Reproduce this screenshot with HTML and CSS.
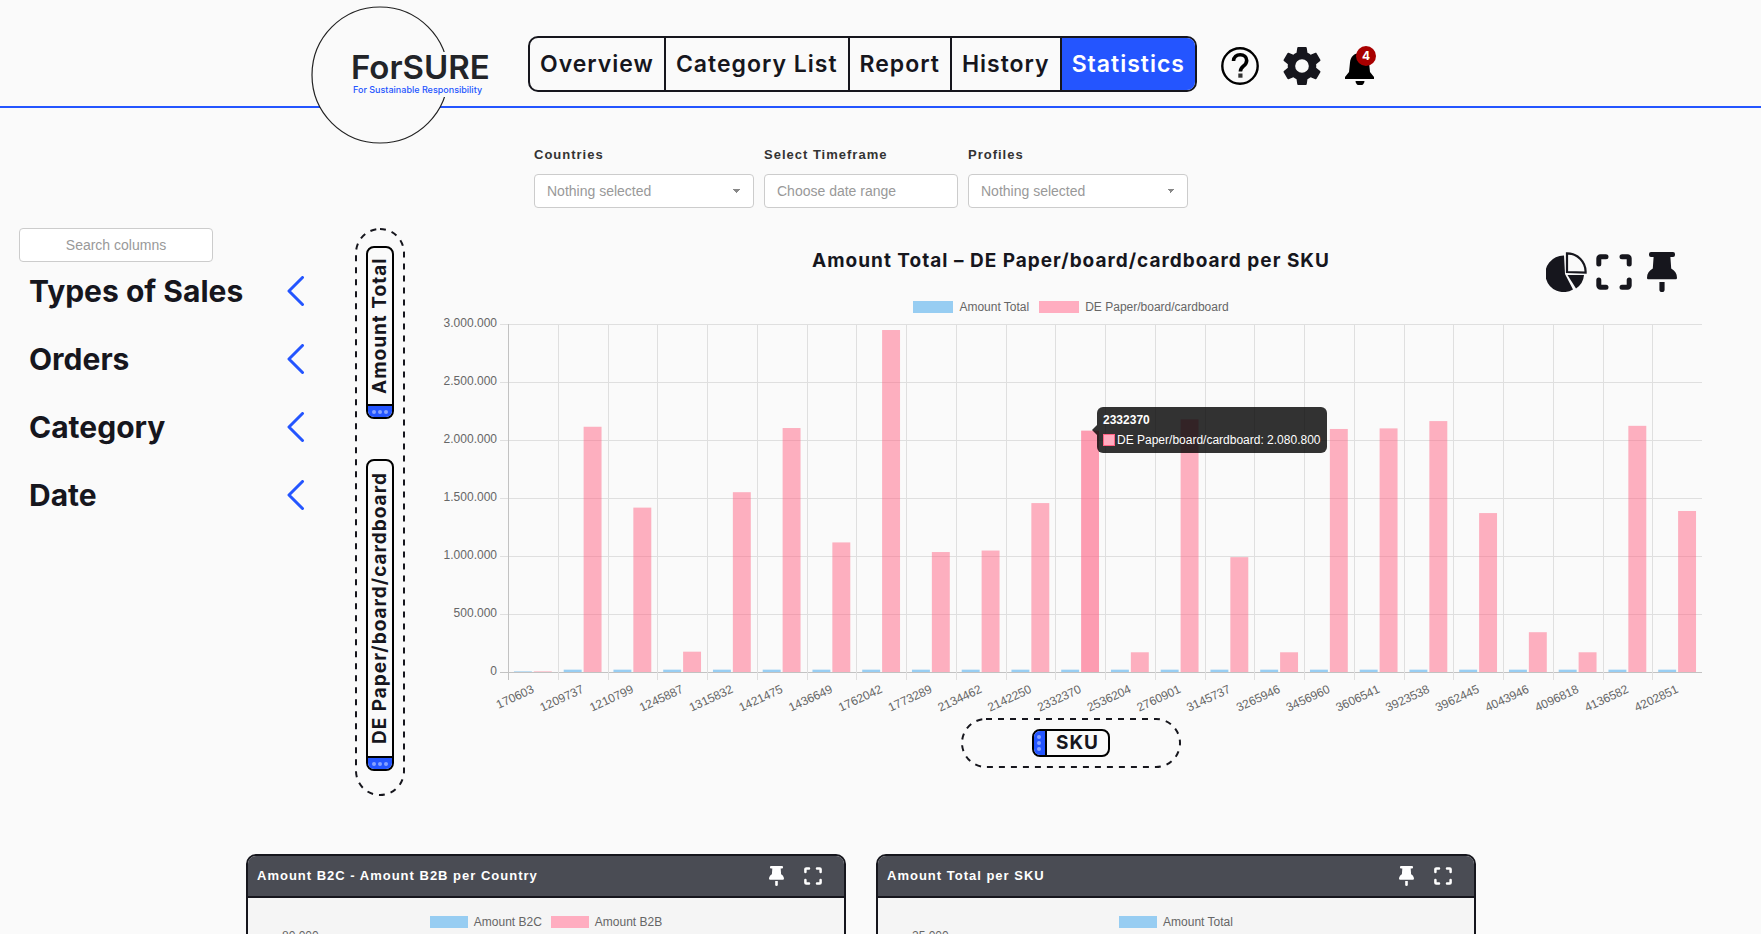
FILE: index.html
```html
<!DOCTYPE html>
<html lang="en">
<head>
	<meta charset="UTF-8" />
	<meta name="viewport" content="width=device-width, initial-scale=1.0" />
	<link rel="stylesheet" href="styles.css">
	<title>ForSURE - Statistics</title>
</head>
<body>
	<!-- shared icons -->
	<svg class="sprite" aria-hidden="true">
		<symbol id="icon-pin" viewBox="0 0 30 40">
			<path d="M4 0h22a2 2 0 0 1 2 2v1a2 2 0 0 1-2 2h-2.600l.8 11.500c3.500 2 5.800 5 5.800 9.200 0 1-.6 1.600-1.600 1.600H1.600C.6 27.300 0 26.700 0 25.700c0-4.200 2.300-7.200 5.800-9.200L6.600 5H4a2 2 0 0 1-2-2V2a2 2 0 0 1 2-2z"/>
			<path d="M12.400 30h5.200v7.400a2.600 2.600 0 0 1-5.200 0z"/>
		</symbol>
		<symbol id="icon-expand" viewBox="0 0 36 36">
			<path d="M2.800 10V4.500a1.700 1.700 0 0 1 1.700-1.700H10M26 2.800h5.500a1.700 1.700 0 0 1 1.700 1.700V10M33.200 26v5.500a1.700 1.700 0 0 1-1.700 1.700H26M10 33.200H4.500a1.700 1.700 0 0 1-1.700-1.700V26" fill="none" stroke="currentColor" stroke-width="5" stroke-linecap="round"/>
		</symbol>
		<symbol id="icon-chevron" viewBox="0 0 18 30">
			<path d="M15.500 1.500L2 15l13.500 13.500" fill="none" stroke="currentColor" stroke-width="3" stroke-linecap="round" stroke-linejoin="round"/>
		</symbol>
	</svg>

	<header class="header">
		<a class="logo" href="#" aria-label="ForSURE">
			<svg width="180" height="138" viewBox="0 0 180 138">
				<circle class="logo-ring" cx="69" cy="69" r="68"/>
				<rect class="logo-gap" x="118" y="46" width="30" height="45"/>
				<text class="logo-name" x="40" y="73">ForSURE</text>
				<text class="logo-claim" x="42" y="87">For Sustainable Responsibility</text>
			</svg>
		</a>
		<nav class="nav">
			<a class="nav-link" href="#">Overview</a>
			<a class="nav-link" href="#">Category List</a>
			<a class="nav-link" href="#">Report</a>
			<a class="nav-link" href="#">History</a>
			<a class="nav-link active" href="#">Statistics</a>
		</nav>
		<div class="header-icons">
			<button class="icon-btn" aria-label="Help">
				<svg width="38" height="38" viewBox="0 0 38 38">
					<circle cx="19" cy="19" r="17.700" fill="none" stroke="#000" stroke-width="2.400"/>
					<path d="M12.500 14c.2-4 3-6.300 6.700-6.300 3.800 0 6.500 2.300 6.500 5.700 0 2.700-1.500 4.200-3.300 5.700-2 1.700-3 2.700-3 5.300" fill="none" stroke="#000" stroke-width="3.600"/>
					<rect x="17.300" y="26.500" width="4.200" height="4.200"/>
				</svg>
			</button>
			<button class="icon-btn" aria-label="Settings">
				<svg width="38" height="38" viewBox="2 2 20 20">
					<path fill="#16161d" d="M19.430 12.980c.04-.32.07-.64.07-.98s-.03-.66-.07-.98l2.110-1.650c.19-.15.240-.42.120-.64l-2-3.460c-.12-.22-.39-.3-.61-.22l-2.490 1c-.52-.4-1.080-.73-1.690-.98l-.38-2.650C14.460 2.180 14.250 2 14 2h-4c-.25 0-.46.180-.49.420l-.38 2.650c-.61.250-1.170.590-1.690.980l-2.490-1c-.23-.09-.49 0-.61.220l-2 3.460c-.13.220-.07.490.120.640l2.110 1.650c-.04.320-.07.650-.07.980s.03.660.070.980l-2.110 1.650c-.19.150-.24.420-.12.640l2 3.460c.12.220.390.300.610.220l2.490-1c.52.400 1.080.730 1.690.980l.38 2.650c.03.240.240.420.490.420h4c.25 0 .46-.18.490-.42l.38-2.650c.61-.25 1.170-.59 1.690-.98l2.490 1c.23.090.490 0 .61-.22l2-3.460c.12-.22.070-.49-.12-.64l-2.110-1.650zM12 15.600a3.600 3.600 0 1 1 0-7.200 3.600 3.600 0 0 1 0 7.200z"/>
				</svg>
			</button>
			<button class="icon-btn bell" aria-label="Notifications">
				<svg width="30" height="38" viewBox="0 0 30 38">
					<path d="M15 6C9 6 5.500 10 5 15.500L4 25l-4 5v2h29v-2l-4-5-1-9.500C23.500 10 21 6 15 6z"/>
					<path d="M10.500 34h9a4.500 4.500 0 0 1-9 0z"/>
				</svg>
				<span class="badge">4</span>
			</button>
		</div>
	</header>

	<form class="filters">
		<div class="field">
			<label for="countries">Countries</label>
			<select class="control" id="countries"><option>Nothing selected</option></select>
		</div>
		<div class="field field-date">
			<label for="timeframe">Select Timeframe</label>
			<input class="control" id="timeframe" type="text" placeholder="Choose date range">
		</div>
		<div class="field">
			<label for="profiles">Profiles</label>
			<select class="control" id="profiles"><option>Nothing selected</option></select>
		</div>
	</form>

	<main class="workspace">
		<aside class="sidebar">
			<input class="control search" type="text" placeholder="Search columns" aria-label="Search columns">
			<button class="group">Types of Sales<svg class="chevron"><use href="#icon-chevron"/></svg></button>
			<button class="group">Orders<svg class="chevron"><use href="#icon-chevron"/></svg></button>
			<button class="group">Category<svg class="chevron"><use href="#icon-chevron"/></svg></button>
			<button class="group">Date<svg class="chevron"><use href="#icon-chevron"/></svg></button>
		</aside>

		<div class="dropzone dropzone-y">
			<svg class="outline" aria-hidden="true"><rect class="dashes" x="1" y="1" rx="24"/></svg>
			<div class="chip chip-y chip-short"><span class="chip-text">Amount Total</span><span class="handle"><i></i><i></i><i></i></span></div>
			<div class="chip chip-y"><span class="chip-text">DE Paper/board/cardboard</span><span class="handle"><i></i><i></i><i></i></span></div>
		</div>

		<section class="chart-area">
			<div class="chart-head">
				<h1 class="chart-title">Amount Total – DE Paper/board/cardboard per SKU</h1>
				<div class="chart-tools">
					<button class="icon-btn" aria-label="Chart type">
						<svg width="41" height="40" viewBox="0 0 41 40">
							<path d="M18 3.500A18.300 18.300 0 1 0 27 37.500L19 22z"/>
							<path d="M21.500 23H38a18 18 0 0 1-8 13.500z"/>
							<path d="M21 1.300A18.500 18.500 0 0 1 39.600 20.500L21 20z" fill="none" stroke="#16161d" stroke-width="2.200"/>
						</svg>
					</button>
					<button class="icon-btn" aria-label="Fullscreen"><svg width="36" height="36"><use href="#icon-expand"/></svg></button>
					<button class="icon-btn pin" aria-label="Pin"><svg width="30" height="40"><use href="#icon-pin"/></svg></button>
				</div>
			</div>
			<div class="legend">
				<span class="legend-item"><i class="swatch blue"></i>Amount Total</span>
				<span class="legend-item"><i class="swatch pink"></i>DE Paper/board/cardboard</span>
			</div>
			<div class="plot">
				<svg id="chart" class="chart" role="img" aria-label="Amount Total and DE Paper/board/cardboard per SKU"></svg>
				<div id="tooltip" class="tooltip">
					<strong>2332370</strong>
					<span><i class="tip-swatch"></i>DE Paper/board/cardboard: 2.080.800</span>
				</div>
			</div>
			<div class="dropzone dropzone-x">
				<svg class="outline" aria-hidden="true"><rect class="dashes" x="1" y="1" rx="24"/></svg>
				<div class="chip chip-x"><span class="handle"><i></i><i></i><i></i></span><span class="chip-text">SKU</span></div>
			</div>
		</section>
	</main>

	<section class="cards">
		<article class="card">
			<div class="card-head">
				<h2 class="card-title">Amount B2C - Amount B2B per Country</h2>
				<button class="icon-btn" aria-label="Pin"><svg width="15" height="20"><use href="#icon-pin"/></svg></button>
				<button class="icon-btn" aria-label="Fullscreen"><svg width="18" height="18"><use href="#icon-expand"/></svg></button>
			</div>
			<div class="card-body">
				<div class="legend">
					<span class="legend-item"><i class="swatch blue"></i>Amount B2C</span>
					<span class="legend-item"><i class="swatch pink"></i>Amount B2B</span>
				</div>
				<span class="card-tick">80.000</span>
			</div>
		</article>
		<article class="card">
			<div class="card-head">
				<h2 class="card-title">Amount Total per SKU</h2>
				<button class="icon-btn" aria-label="Pin"><svg width="15" height="20"><use href="#icon-pin"/></svg></button>
				<button class="icon-btn" aria-label="Fullscreen"><svg width="18" height="18"><use href="#icon-expand"/></svg></button>
			</div>
			<div class="card-body">
				<div class="legend">
					<span class="legend-item"><i class="swatch blue"></i>Amount Total</span>
				</div>
				<span class="card-tick">25.000</span>
			</div>
		</article>
	</section>

	<script src="chart.js"></script>
</body>
</html>
```
FILE: styles.css
```css
* {
	box-sizing: border-box;
}
body {
	margin: 0;
	height: 100vh;
	overflow: hidden;
	background-color: #fafafa;
	color: #333;
	font-family: "Liberation Sans", Arial, sans-serif;
	font-size: 14px;
	line-height: 20px;
}
button {
	margin: 0;
	padding: 0;
	border: 0;
	background: none;
	color: inherit;
	font: inherit;
	cursor: pointer;
}
svg {
	display: block;
}
.sprite {
	display: none;
}
.icon-btn {
	position: relative;
	fill: currentColor;
}

/* header */
.header {
	display: flex;
	height: 108px;
	padding-left: 311px;
	border-bottom: 2px solid #2455ff;
}
.logo {
	width: 217px;
	height: 138px;
	padding-top: 6px;
}
.logo-ring {
	fill: #fafafa;
	stroke: #222;
	stroke-width: 1.2;
}
.logo-gap {
	fill: #fafafa;
}
.logo-name {
	font: 600 33px Inter, sans-serif;
	fill: #222428;
}
.logo-claim {
	font: 500 9px Inter, sans-serif;
	fill: #2455ff;
}
.nav {
	display: flex;
	height: 56px;
	margin-top: 36px;
	border: 2px solid #16161d;
	border-radius: 10px;
	overflow: hidden;
}
.nav-link {
	padding: 0 10px;
	color: #16161d;
	font: 600 23px/52px Inter, sans-serif;
	letter-spacing: 1px;
	text-decoration: none;
}
.nav-link + .nav-link {
	border-left: 2px solid #16161d;
}
.nav-link.active {
	background-color: #2455ff;
	color: #fff;
}
.header-icons {
	display: flex;
	align-items: flex-start;
	gap: 24px;
	margin: 47px 0 0 24px;
}
.bell {
	color: #000;
}
.badge {
	position: absolute;
	top: -1px;
	right: -1px;
	width: 20px;
	height: 20px;
	border-radius: 50%;
	background-color: #a80000;
	color: #fff;
	font: 700 12px/20px Inter, sans-serif;
}

/* filters */
.filters {
	display: flex;
	gap: 10px;
	margin: 36px 0 0 534px;
}
.field {
	width: 220px;
}
.field-date {
	width: 194px;
}
.field label {
	display: block;
	margin-bottom: 8px;
	font-size: 13px;
	font-weight: 700;
	line-height: 22px;
	letter-spacing: 1px;
}
.control {
	display: block;
	width: 100%;
	height: 34px;
	padding: 0 12px;
	border: 1px solid #ccc;
	border-radius: 4px;
	background-color: #fff;
	color: #999;
	font: 14px/20px "Liberation Sans", Arial, sans-serif;
}
.control::placeholder {
	color: #999;
}
select.control {
	appearance: none;
	background-image: linear-gradient(to bottom right, #888 50%, transparent 50%), linear-gradient(to bottom left, #888 50%, transparent 50%);
	background-position: right 12px center, right 16px center;
	background-size: 4px 4px;
	background-repeat: no-repeat;
}

/* workspace */
.workspace {
	display: flex;
	margin-top: 20px;
	padding: 0 59px 0 19px;
}
.sidebar {
	flex: 0 0 286px;
}
.search {
	width: 194px;
	text-align: center;
}
.group {
	display: flex;
	align-items: center;
	justify-content: space-between;
	width: 100%;
	height: 38px;
	margin: 10px 0 30px;
	padding-left: 10px;
	color: #16161d;
	font: 700 30px/38px Inter, sans-serif;
}
.chevron {
	width: 18px;
	height: 30px;
	color: #2455ff;
}
.dropzone {
	position: relative;
	display: flex;
}
.outline {
	position: absolute;
	inset: 0;
	width: 100%;
	height: 100%;
}
.dashes {
	width: calc(100% - 2px);
	height: calc(100% - 2px);
	fill: none;
	stroke: #16161d;
	stroke-width: 2;
	stroke-dasharray: 6 6;
}
.dropzone-y {
	flex: 0 0 50px;
	flex-direction: column;
	align-items: center;
	gap: 40px;
	height: 568px;
	margin-left: 50px;
	padding-top: 18px;
}
.dropzone-x {
	align-items: center;
	justify-content: center;
	width: 220px;
	height: 50px;
	margin: 0 auto;
}
.chip {
	display: flex;
	border: 2px solid #000;
	border-radius: 8px;
	overflow: hidden;
	color: #16161d;
	font: 700 19px/24px Inter, sans-serif;
	letter-spacing: 1px;
}
.chip-y {
	flex-direction: column;
	width: 28px;
	height: 312px;
}
.chip-short {
	height: 173px;
}
.chip-y .chip-text {
	flex: 1;
	writing-mode: vertical-rl;
	transform: rotate(180deg);
	text-align: center;
	white-space: nowrap;
}
.chip-x .chip-text {
	padding: 0 9px;
}
.handle {
	display: flex;
	align-items: center;
	justify-content: center;
	gap: 2px;
	background-color: #2455ff;
}
.handle i {
	width: 4px;
	height: 4px;
	border-radius: 50%;
	background-color: #87a2ff;
}
.chip-y .handle {
	height: 13px;
	border-top: 2px solid #000;
}
.chip-x .handle {
	flex-direction: column;
	width: 13px;
	border-right: 2px solid #000;
}

/* main chart */
.chart-area {
	flex: 1;
	min-width: 0;
	margin-left: 35px;
}
.chart-head {
	display: grid;
	grid-template-columns: 1fr auto 1fr;
	height: 72px;
	padding-top: 20px;
}
.chart-title {
	grid-column: 2;
	margin: 0;
	color: #16161d;
	font: 700 19px/26px Inter, sans-serif;
	letter-spacing: 1px;
	white-space: nowrap;
}
.chart-tools {
	display: flex;
	align-items: center;
	justify-content: flex-end;
	gap: 9px;
	height: 40px;
	margin: 4px 25px 0 0;
	color: #16161d;
}
.pin {
	margin-left: 6px;
}
.legend {
	display: flex;
	justify-content: center;
	gap: 10px;
	color: #666;
	font-size: 12px;
	line-height: 14px;
}
.legend-item {
	display: flex;
	align-items: center;
	gap: 6px;
}
.swatch {
	width: 40px;
	height: 12px;
}
.blue {
	background-color: #97cdf2;
}
.pink {
	background-color: #ffadc0;
}
.plot {
	position: relative;
}
.chart {
	width: 100%;
	height: 404px;
	font-size: 12px;
}
.chart text {
	fill: #666;
}
.tooltip {
	display: flex;
	position: absolute;
	flex-direction: column;
	gap: 6px;
	padding: 6px;
	border-radius: 6px;
	background-color: rgba(0, 0, 0, 0.8);
	color: #fff;
	font-size: 12px;
	line-height: 14px;
	white-space: nowrap;
}
.tooltip::before {
	content: "";
	position: absolute;
	top: 18px;
	left: -5px;
	border: 5px solid transparent;
	border-left: 0;
	border-right-color: rgba(0, 0, 0, 0.8);
}
.tooltip span {
	display: flex;
	align-items: center;
	gap: 2px;
}
.tip-swatch {
	width: 12px;
	height: 12px;
	border: 1px solid #ff6384;
	background-color: #ffadc0;
}

/* cards */
.cards {
	display: flex;
	gap: 30px;
	margin: 58px 285px 0 246px;
}
.card {
	flex: 1;
	height: 400px;
	border: 2px solid #16161d;
	border-radius: 10px;
	overflow: hidden;
	background-color: #f5f5f5;
}
.card-head {
	display: flex;
	align-items: center;
	gap: 20px;
	height: 42px;
	padding: 0 22px 0 9px;
	border-bottom: 2px solid #16161d;
	background-color: #4a4c54;
	color: #fff;
}
.card-title {
	flex: 1;
	margin: 0;
	font-size: 13px;
	letter-spacing: 1px;
}
.card-body {
	padding: 17px 34px 0;
}
.card-body .legend {
	gap: 9px;
}
.card-body .swatch {
	width: 38px;
}
.card-tick {
	display: block;
	color: #666;
	font-size: 12px;
	line-height: 14px;
}
```
FILE: chart.js
```js
const rows = [
	["170603", 500, 2000],
	["1209737", 20000, 2114000],
	["1210799", 20000, 1417000],
	["1245887", 20000, 175000],
	["1315832", 20000, 1550000],
	["1421475", 20000, 2103000],
	["1436649", 20000, 1117000],
	["1762042", 20000, 2948000],
	["1773289", 20000, 1034000],
	["2134462", 20000, 1047000],
	["2142250", 20000, 1456000],
	["2332370", 20000, 2080800],
	["2536204", 20000, 170000],
	["2760901", 20000, 2178000],
	["3145737", 20000, 990000],
	["3265946", 20000, 170000],
	["3456960", 20000, 2095000],
	["3606541", 20000, 2100000],
	["3923538", 20000, 2163000],
	["3962445", 20000, 1370000],
	["4043946", 20000, 343000],
	["4096818", 20000, 170000],
	["4136582", 20000, 2122000],
	["4202851", 20000, 1388000],
];
const hovered = 11;
const max = 3000000;
const left = 68;
const top_ = 10;
const plotHeight = 348;

const chart = document.querySelector("#chart");
const tooltip = document.querySelector("#tooltip");

const format = (n) => String(n).replace(/\B(?=(\d{3})+$)/g, ".");
const line = (x1, y1, x2, y2, color) =>
	`<path d="M${x1} ${y1}L${x2} ${y2}" stroke="${color}"/>`;

const draw = () => {
	const width = chart.clientWidth;
	const step = (width - left) / rows.length;
	const bottom = top_ + plotHeight;
	let out = "";

	for (let v = 0; v <= max; v += 500000) {
		const y = Math.round(bottom - (v / max) * plotHeight) + 0.5;
		out += line(left - 8, y, width, y, v ? "#dfdfdf" : "#c2c2c2");
		out += `<text x="${left - 11}" y="${y + 2}" text-anchor="end">${format(v)}</text>`;
	}

	rows.forEach(([sku, total, paper], i) => {
		const x = left + i * step;
		const gx = Math.round(x) + 0.5;
		const bar = step * 0.36;
		const h1 = Math.max((total / max) * plotHeight, 0.6);
		const h2 = Math.max((paper / max) * plotHeight, 0.6);
		out += line(gx, top_, gx, bottom + 8, i ? "#dfdfdf" : "#c2c2c2");
		out += `<rect x="${x + step * 0.12}" y="${bottom - h1}" width="${bar}" height="${h1}" fill="#36a2eb" fill-opacity="0.5"/>`;
		out += `<rect x="${x + step * 0.52}" y="${bottom - h2}" width="${bar}" height="${h2}" fill="#ff6384" fill-opacity="${i === hovered ? 0.62 : 0.5}"/>`;
		out += `<text text-anchor="end" transform="translate(${x + step / 2 + 2} ${bottom + 20}) rotate(-25)">${sku}</text>`;
	});
	chart.innerHTML = out;

	tooltip.style.left = left + (hovered + 0.88) * step - 2 + "px";
	tooltip.style.top = bottom - (rows[hovered][2] / max) * plotHeight - 24 + "px";
};

draw();
window.addEventListener("resize", draw);
```
